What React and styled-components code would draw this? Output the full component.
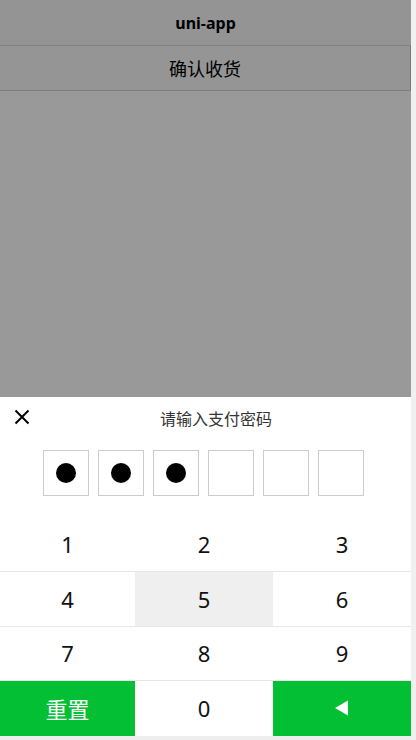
import React, { useState } from "react";
import styled, { createGlobalStyle } from "styled-components";

const GlobalStyle = createGlobalStyle`
  html, body {
    margin: 0;
    padding: 0;
    background: #f0f0f0;
    font-family: "Noto Sans", "Noto Sans CJK SC", sans-serif;
  }
`;

const Page = styled.div`
  position: relative;
  width: 411px;
  height: 740px;
  background: #ffffff;
  overflow: hidden;
`;

const NavBar = styled.div`
  height: 45px;
  display: flex;
  align-items: center;
  justify-content: center;
  background: #f7f7f7;
  border-bottom: 1px solid #d8d8d8;
  font-size: 16px;
  font-weight: 700;
  color: #000;
`;

const ConfirmButton = styled.div`
  height: 44px;
  display: flex;
  align-items: center;
  justify-content: center;
  background: #f8f8f8;
  border-bottom: 1px solid #d0d0d0;
  border-right: 1px solid #c8c8c8;
  font-size: 18px;
  color: #000;
`;

const Mask = styled.div`
  position: absolute;
  inset: 0;
  background: rgba(0, 0, 0, 0.4);
`;

const Sheet = styled.div`
  position: absolute;
  left: 0;
  right: 0;
  bottom: 0;
  height: 343px;
  background: #ffffff;
  display: flex;
  flex-direction: column;
`;

const SheetHeader = styled.div`
  position: relative;
  height: 44px;
  display: flex;
  align-items: center;
  justify-content: center;
  font-size: 16px;
  color: #333;
  padding: 0 0 2px 21px;
  box-sizing: border-box;
`;

const CloseIcon = styled.svg`
  position: absolute;
  left: 14px;
  top: 12px;
  width: 16px;
  height: 16px;
`;

const Boxes = styled.div`
  display: flex;
  gap: 9px;
  margin-top: 9px;
  padding-left: 43px;
`;

const Box = styled.div`
  width: 46px;
  height: 46px;
  box-sizing: border-box;
  border: 1px solid #cccccc;
  display: flex;
  align-items: center;
  justify-content: center;
`;

const Dot = styled.span`
  width: 20px;
  height: 20px;
  border-radius: 50%;
  background: #000;
`;

const Keypad = styled.div`
  margin-top: 21.5px;
  display: grid;
  grid-template-columns: 135px 138px 138px;
  grid-auto-rows: 54.5px;
`;

const Key = styled.div`
  display: flex;
  align-items: center;
  justify-content: center;
  border-bottom: ${({ $last }) => ($last ? "none" : "1px solid #e6e6e6")};
  box-sizing: border-box;
  background: ${({ $green, $pressed }) =>
    $green ? "#03bf33" : $pressed ? "#efefef" : "#ffffff"};
  color: ${({ $green }) => ($green ? "#ffffff" : "#111")};
  font-size: 22px;
`;

const Footer = styled.div`
  flex: 1;
  background: #eeeeee;
`;

export default function App() {
  const [filled] = useState(3);
  const digits = ["1", "2", "3", "4", "5", "6", "7", "8", "9"];

  return (
    <>
      <GlobalStyle />
      <Page>
        <NavBar>uni-app</NavBar>
        <ConfirmButton>确认收货</ConfirmButton>
        <Mask />
        <Sheet>
          <SheetHeader>
            <CloseIcon viewBox="0 0 16 16">
              <path d="M1.5 1.5 L14.5 14.5 M14.5 1.5 L1.5 14.5" stroke="#000" strokeWidth="2" />
            </CloseIcon>
            请输入支付密码
          </SheetHeader>
          <Boxes>
            {Array.from({ length: 6 }).map((_, i) => (
              <Box key={i}>{i < filled && <Dot />}</Box>
            ))}
          </Boxes>
          <Keypad>
            {digits.map((d) => (
              <Key key={d} $pressed={d === "5"}>
                {d}
              </Key>
            ))}
            <Key $green $last>重置</Key>
            <Key $last>0</Key>
            <Key $green $last>
              <svg width="14" height="16" viewBox="0 0 14 16">
                <path d="M0 8 L13 0.5 L13 15.5 Z" fill="#fff" />
              </svg>
            </Key>
          </Keypad>
          <Footer />
        </Sheet>
      </Page>
    </>
  );
}
